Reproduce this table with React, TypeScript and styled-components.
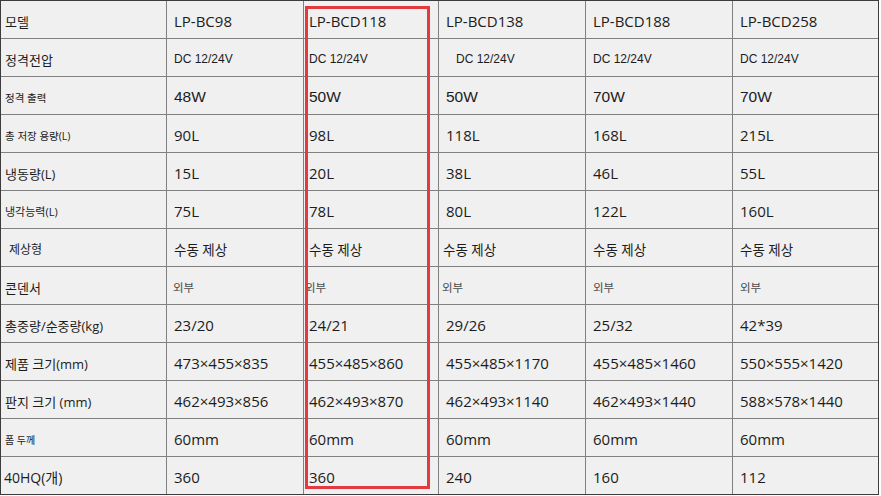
import React from 'react'
import styled, { createGlobalStyle } from 'styled-components'

const GlobalStyle = createGlobalStyle`
  html, body {
    margin: 0;
    padding: 0;
    background: #ffffff;
  }
`

const korean = `"Open Sans", "Noto Sans CJK KR", sans-serif`
const arial = `"Liberation Sans", Arial, sans-serif`

type Row = {
  label: string
  labelSize: number
  labelIndent?: number
  values: string[]
  valueSize?: number
  valueFont?: string
  muted?: boolean
  shifts?: number[]
}

const rows: Row[] = [
  { label: '모델', labelSize: 13, values: ['LP-BC98', 'LP-BCD118', 'LP-BCD138', 'LP-BCD188', 'LP-BCD258'] },
  {
    label: '정격전압',
    labelSize: 13,
    values: ['DC 12/24V', 'DC 12/24V', 'DC 12/24V', 'DC 12/24V', 'DC 12/24V'],
    valueSize: 12,
    valueFont: arial,
    shifts: [0, 0, 10, 0, 0],
  },
  { label: '정격 출력', labelSize: 10.5, values: ['48W', '50W', '50W', '70W', '70W'], valueSize: 15.5, valueFont: arial },
  { label: '총 저장 용량(L)', labelSize: 10.5, values: ['90L', '98L', '118L', '168L', '215L'] },
  { label: '냉동량(L)', labelSize: 13, values: ['15L', '20L', '38L', '46L', '55L'] },
  { label: '냉각능력(L)', labelSize: 11, values: ['75L', '78L', '80L', '122L', '160L'] },
  {
    label: '제상형',
    labelSize: 12,
    labelIndent: 8,
    values: ['수동 제상', '수동 제상', '수동 제상', '수동 제상', '수동 제상'],
    valueSize: 13.5,
    shifts: [0, 0, -3, 0, 0],
  },
  {
    label: '콘덴서',
    labelSize: 13,
    values: ['외부', '외부', '외부', '외부', '외부'],
    valueSize: 11.5,
    muted: true,
    shifts: [-1, -4, -4, 0, 0],
  },
  { label: '총중량/순중량(kg)', labelSize: 13, values: ['23/20', '24/21', '29/26', '25/32', '42*39'] },
  {
    label: '제품 크기(mm)',
    labelSize: 13,
    values: ['473×455×835', '455×485×860', '455×485×1170', '455×485×1460', '550×555×1420'],
  },
  {
    label: '판지 크기 (mm)',
    labelSize: 13,
    values: ['462×493×856', '462×493×870', '462×493×1140', '462×493×1440', '588×578×1440'],
  },
  { label: '폼 두께', labelSize: 10, values: ['60mm', '60mm', '60mm', '60mm', '60mm'] },
  { label: '40HQ(개)', labelSize: 14, labelIndent: 3, values: ['360', '360', '240', '160', '112'] },
]

// left padding for each value column
const columnIndent = [7, 5, 7, 7, 7]

const Frame = styled.div`
  position: relative;
  width: fit-content;
`

const Sheet = styled.div`
  display: grid;
  grid-template-columns: 165px 136px 134px 146px 146px 145px;
  grid-auto-rows: 37px;
  gap: 1px;
  background: #808080;
  border: 1px solid #3c3c3c;
`

const Cell = styled.div<{ $indent: number; $size: number; $font?: string; $muted?: boolean }>`
  display: flex;
  align-items: center;
  padding: 3px 0 0 ${(p) => p.$indent}px;
  background: #f0f0f0;
  color: ${(p) => (p.$muted ? '#4a4a4a' : '#1c1c1c')};
  font-family: ${(p) => p.$font || korean};
  font-size: ${(p) => p.$size}px;
  white-space: nowrap;
  overflow: hidden;
`

const Highlight = styled.div`
  position: absolute;
  left: 305px;
  top: 6px;
  width: 125px;
  height: 483px;
  box-sizing: border-box;
  border: 3px solid #e43a3f;
  pointer-events: none;
`

export default function App() {
  return (
    <>
      <GlobalStyle />
      <Frame>
        <Sheet>
          {rows.map((row) => (
            <React.Fragment key={row.label}>
              <Cell $indent={row.labelIndent ?? 4} $size={row.labelSize}>
                {row.label}
              </Cell>
              {row.values.map((v, i) => (
                <Cell
                  key={i}
                  $indent={columnIndent[i] + (row.shifts ? row.shifts[i] : 0)}
                  $size={row.valueSize ?? 15}
                  $font={row.valueFont}
                  $muted={row.muted}
                >
                  {v}
                </Cell>
              ))}
            </React.Fragment>
          ))}
        </Sheet>
        <Highlight />
      </Frame>
    </>
  )
}
